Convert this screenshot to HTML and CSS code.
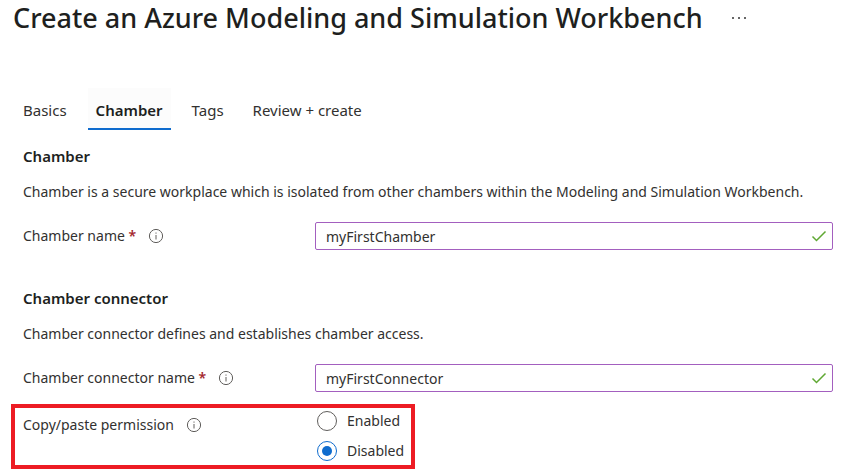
FILE: index.html
```html
<!DOCTYPE html>
<html lang="en">
<head>
<meta charset="utf-8">
<meta name="viewport" content="width=device-width, initial-scale=1">
<title>Create an Azure Modeling and Simulation Workbench</title>
<link rel="stylesheet" href="styles.css">
</head>
<body>
<header class="page-header">
  <h1>Create an Azure Modeling and Simulation Workbench</h1>
  <button class="more" type="button" aria-label="More actions">
    <svg width="14" height="4" viewBox="0 0 14 4"><path d="M0 1h2v2H0zM6 1h2v2H6zM12 1h2v2h-2z" fill="#666"/></svg>
  </button>
</header>
<main class="content">
  <nav class="tabs">
    <a class="tab" href="#basics">Basics</a>
    <a class="tab tab-active" href="#chamber" aria-current="page">Chamber</a>
    <a class="tab" href="#tags">Tags</a>
    <a class="tab" href="#review">Review + create</a>
  </nav>
  <form>
    <section class="section">
      <h2>Chamber</h2>
      <p>Chamber is a secure workplace which is isolated from other chambers within the Modeling and Simulation Workbench.</p>
      <div class="row">
        <div class="caption">
          <label for="chamber-name">Chamber name <span class="required">*</span></label>
          <svg class="info" viewBox="0 0 16 16"><circle cx="8" cy="8" r="6.6"/><path d="M8 7v4.5M8 4.5v1.2"/></svg>
        </div>
        <div class="field">
          <input id="chamber-name" type="text" value="myFirstChamber">
          <svg class="check" viewBox="0 0 16 12"><path d="M1.5 6.5l4 4 9-9"/></svg>
        </div>
      </div>
    </section>
    <section class="section">
      <h2>Chamber connector</h2>
      <p>Chamber connector defines and establishes chamber access.</p>
      <div class="row">
        <div class="caption">
          <label for="connector-name">Chamber connector name <span class="required">*</span></label>
          <svg class="info" viewBox="0 0 16 16"><circle cx="8" cy="8" r="6.6"/><path d="M8 7v4.5M8 4.5v1.2"/></svg>
        </div>
        <div class="field">
          <input id="connector-name" type="text" value="myFirstConnector">
          <svg class="check" viewBox="0 0 16 12"><path d="M1.5 6.5l4 4 9-9"/></svg>
        </div>
      </div>
      <div class="row highlight" role="radiogroup" aria-labelledby="permission">
        <div class="caption">
          <span id="permission">Copy/paste permission</span>
          <svg class="info" viewBox="0 0 16 16"><circle cx="8" cy="8" r="6.6"/><path d="M8 7v4.5M8 4.5v1.2"/></svg>
        </div>
        <div class="options">
          <label class="option"><input type="radio" name="permission" value="enabled">Enabled</label>
          <label class="option"><input type="radio" name="permission" value="disabled" checked>Disabled</label>
        </div>
      </div>
    </section>
  </form>
</main>
</body>
</html>
```
FILE: styles.css
```css
* {
  box-sizing: border-box;
}

body {
  margin: 0;
  background: #fff;
  color: #323130;
  font: 14px/20px "Segoe UI", "Noto Sans", "Open Sans", sans-serif;
}

h1,
h2,
p {
  margin: 0;
}

.page-header {
  display: flex;
  align-items: center;
  gap: 29px;
  padding-left: 13px;
}

h1 {
  color: #201f1e;
  font-size: 27px;
  font-weight: 500;
  line-height: 36px;
}

.more {
  display: flex;
  padding: 0;
  border: 0;
  background: none;
}

.content {
  padding: 52px 15px 4px 23px;
}

.tabs {
  display: flex;
  gap: 13px;
  margin-left: -8px;
}

.tab {
  padding: 12px 8px 8px;
  border-bottom: 2px solid transparent;
  color: #323130;
  font-size: 15px;
  text-decoration: none;
}

.tab-active {
  border-color: #0f6cce;
  background: #fcfcfc;
  color: #201f1e;
  font-weight: 600;
}

.section {
  padding-top: 16px;
}

.section + .section {
  padding-top: 38px;
}

h2 {
  margin-bottom: 16px;
  color: #201f1e;
  font-size: 15px;
  font-weight: 600;
  line-height: 20px;
}

p {
  margin-bottom: 20px;
}

.row {
  display: grid;
  grid-template-columns: 292px minmax(0, 1fr);
}

.caption {
  display: flex;
  align-items: center;
  gap: 12px;
  height: 28px;
}

.required {
  color: #a4262c;
  font-weight: 600;
}

.info {
  width: 16px;
  height: 16px;
  fill: none;
  stroke: #605e5c;
}

.field {
  position: relative;
}

.field input {
  display: block;
  width: 100%;
  height: 28px;
  padding: 0 32px 0 10px;
  border: 1px solid #a35fbf;
  border-radius: 2px;
  background: #fff;
  color: #323130;
  font: inherit;
}

.check {
  position: absolute;
  top: 8px;
  right: 6px;
  width: 16px;
  height: 12px;
  fill: none;
  stroke: #5fa832;
  stroke-width: 1.5;
}

.highlight {
  width: fit-content;
  margin: 12px 0 0 -12px;
  padding: 3px 7px 4px 8px;
  border: 4px solid #ed1c24;
}

.options {
  display: grid;
  gap: 10px;
}

.option {
  display: flex;
  align-items: center;
  gap: 10px;
}

.option input {
  display: grid;
  place-items: center;
  width: 20px;
  height: 20px;
  margin: 0 0 0 2px;
  border: 1px solid #605e5c;
  border-radius: 50%;
  appearance: none;
}

.option input:checked {
  border-color: #0f6cce;
}

.option input:checked::before {
  width: 10px;
  height: 10px;
  border-radius: 50%;
  background: #0f6cce;
  content: "";
}
```
